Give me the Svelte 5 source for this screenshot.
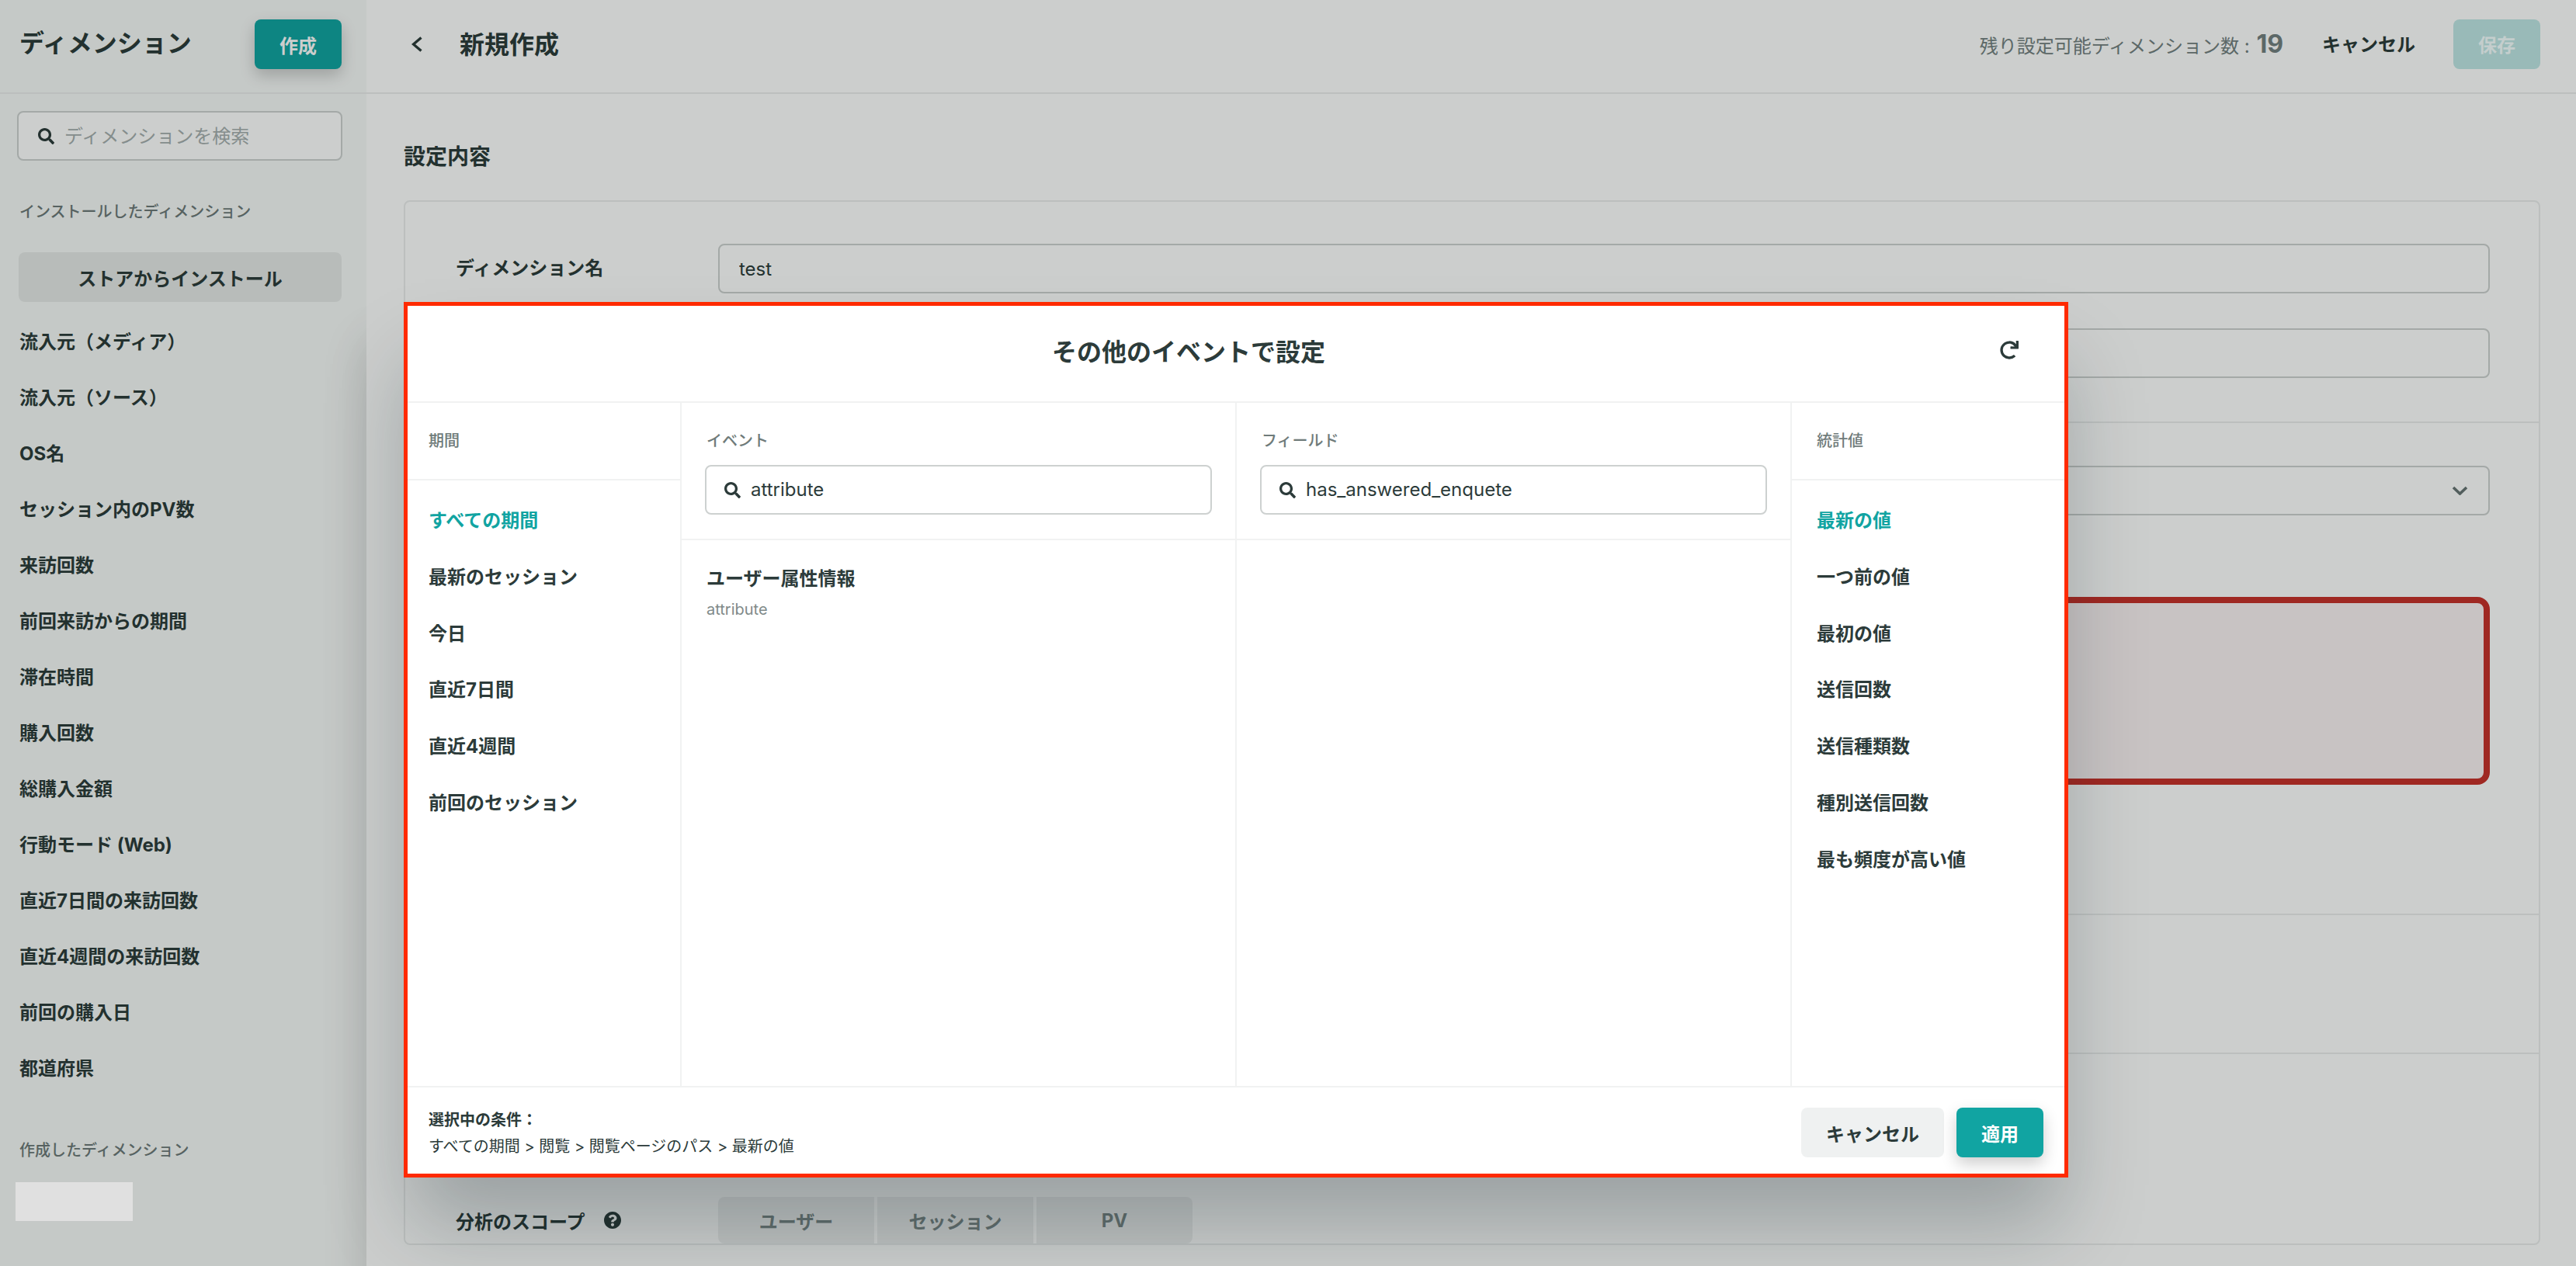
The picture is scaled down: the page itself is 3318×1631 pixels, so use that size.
<script>
  const dims = ['流入元（メディア）', '流入元（ソース）', 'OS名', 'セッション内のPV数', '来訪回数', '前回来訪からの期間', '滞在時間', '購入回数', '総購入金額', '行動モード (Web)', '直近7日間の来訪回数', '直近4週間の来訪回数', '前回の購入日', '都道府県'];
  const periods = ['すべての期間', '最新のセッション', '今日', '直近7日間', '直近4週間', '前回のセッション'];
  const stats = ['最新の値', '一つ前の値', '最初の値', '送信回数', '送信種類数', '種別送信回数', '最も頻度が高い値'];
  const scopes = ['ユーザー', 'セッション', 'PV'];
  const searchPath = 'M505 442.7L405.3 343c-4.5-4.5-10.6-7-17-7H372c27.6-35.3 44-79.7 44-128C416 93.1 322.9 0 208 0S0 93.1 0 208s93.1 208 208 208c48.3 0 92.7-16.4 128-44v16.3c0 6.4 2.5 12.5 7 17l99.7 99.7c9.4 9.4 24.6 9.4 33.9 0l28.3-28.3c9.4-9.4 9.4-24.6.1-34zM208 336c-70.7 0-128-57.2-128-128 0-70.7 57.2-128 128-128 70.7 0 128 57.2 128 128 0 70.7-57.2 128-128 128z';
</script>

<div class="page">
  <aside class="side">
    <header class="side-head">
      <h2>ディメンション</h2>
      <button class="btn primary">作成</button>
    </header>
    <label class="search side-search">
      <svg viewBox="0 0 512 512"><path d={searchPath} /></svg>
      <input placeholder="ディメンションを検索" />
    </label>
    <div class="side-label first">インストールしたディメンション</div>
    <button class="store">ストアからインストール</button>
    <ul class="dim-list">
      {#each dims as d}
        <li>{d}</li>
      {/each}
    </ul>
    <div class="side-label second">作成したディメンション</div>
    <div class="redacted"></div>
  </aside>

  <main class="main">
    <header class="main-head">
      <svg class="back" viewBox="0 0 14 20"><polyline points="12.5,1.5 2.5,10 12.5,18.5" /></svg>
      <h1>新規作成</h1>
      <div class="remain">残り設定可能ディメンション数 : <b>19</b></div>
      <button class="text-btn">キャンセル</button>
      <button class="btn primary disabled">保存</button>
    </header>
    <div class="content">
      <h3>設定内容</h3>
      <section class="card">
        <div class="row row-name">
          <div class="row-label">ディメンション名</div>
          <div class="fields">
            <input class="field" value="test" />
            <input class="field" />
          </div>
        </div>
        <div class="row row-setting">
          <div class="row-label"></div>
          <div class="fields">
            <div class="field select">
              <svg viewBox="0 0 21 12"><polyline points="2,2 10.5,10 19,2" /></svg>
            </div>
            <div class="error-box"></div>
          </div>
        </div>
        <div class="row row-blank"></div>
        <div class="row row-scope">
          <div class="row-label">
            分析のスコープ
            <svg class="help" viewBox="8 8 496 496"><path d="M504 256c0 136.997-111.043 248-248 248S8 392.997 8 256C8 119.083 119.043 8 256 8s248 111.083 248 248zM262.655 90c-54.497 0-89.255 22.957-116.549 63.758-3.536 5.286-2.353 12.415 2.715 16.258l34.699 26.31c5.205 3.947 12.621 3.008 16.665-2.122 17.864-22.658 30.113-35.797 57.303-35.797 20.429 0 45.698 13.148 45.698 32.958 0 14.976-12.363 22.667-32.534 33.976C247.128 238.528 216 254.941 216 296v4c0 6.627 5.373 12 12 12h56c6.627 0 12-5.373 12-12v-1.333c0-28.462 83.186-29.647 83.186-106.667 0-58.002-60.165-102-116.531-102zM256 338c-25.365 0-46 20.635-46 46 0 25.364 20.635 46 46 46s46-20.636 46-46c0-25.365-20.635-46-46-46z" /></svg>
          </div>
          <div class="scopes">
            {#each scopes as s}
              <button class="scope">{s}</button>
            {/each}
          </div>
        </div>
      </section>
    </div>
  </main>

  <div class="scrim"></div>

  <div class="modal">
    <header class="modal-head">
      <h2>その他のイベントで設定</h2>
      <svg class="reset" viewBox="0 0 512 512"><path d="M500.33 0h-47.41a12 12 0 0 0-12 12.57l4 82.76A247.42 247.42 0 0 0 256 8C119.34 8 8.9 119.53 8 256.19 7.1 393.07 118.08 504 256 504a247.1 247.1 0 0 0 166.18-63.91 12 12 0 0 0 .48-17.43l-34-34a12 12 0 0 0-16.38-.55A176 176 0 1 1 402.1 157.8l-101.53-4.87a12 12 0 0 0-12.57 12v47.41a12 12 0 0 0 12 12h200.33a12 12 0 0 0 12-12V12a12 12 0 0 0-12-12z" /></svg>
    </header>
    <div class="cols">
      <div class="col col-side">
        <div class="col-head short"><span>期間</span></div>
        <ul class="opts">
          {#each periods as p, i}
            <li class:active={i === 0}>{p}</li>
          {/each}
        </ul>
      </div>
      <div class="col col-mid">
        <div class="col-head tall">
          <span>イベント</span>
          <label class="search">
            <svg viewBox="0 0 512 512"><path d={searchPath} /></svg>
            <input value="attribute" />
          </label>
        </div>
        <div class="events">
          <div class="ev-title">ユーザー属性情報</div>
          <div class="ev-sub">attribute</div>
        </div>
      </div>
      <div class="col col-mid">
        <div class="col-head tall">
          <span>フィールド</span>
          <label class="search">
            <svg viewBox="0 0 512 512"><path d={searchPath} /></svg>
            <input value="has_answered_enquete" />
          </label>
        </div>
      </div>
      <div class="col col-last">
        <div class="col-head short"><span>統計値</span></div>
        <ul class="opts">
          {#each stats as s, i}
            <li class:active={i === 0}>{s}</li>
          {/each}
        </ul>
      </div>
    </div>
    <footer class="modal-foot">
      <div class="summary">
        <b>選択中の条件：</b>
        <div>すべての期間 &gt; 閲覧 &gt; 閲覧ページのパス &gt; 最新の値</div>
      </div>
      <div class="foot-btns">
        <button class="btn cancel">キャンセル</button>
        <button class="btn primary">適用</button>
      </div>
    </footer>
  </div>
</div>

<style>
  :global(body) {
    margin: 0;
    background: #fff;
  }
  * {
    box-sizing: border-box;
  }
  .page {
    position: relative;
    display: flex;
    width: 3318px;
    height: 1631px;
    overflow: hidden;
    font-family: Inter, "Noto Sans CJK JP", sans-serif;
    color: #2c3b3a;
    background: #fff;
  }
  h1, h2, h3, ul {
    margin: 0;
    padding: 0;
  }
  li {
    list-style: none;
  }
  button {
    font: inherit;
    border: 0;
    cursor: pointer;
  }
  input {
    font: inherit;
    color: inherit;
    border: 0;
    outline: 0;
    background: none;
  }

  .btn {
    height: 64px;
    border-radius: 8px;
    font-size: 24px;
    font-weight: 700;
  }
  .primary {
    width: 112px;
    color: #fff;
    background: #11a4a2;
    box-shadow: 0 8px 20px rgba(0, 0, 0, 0.2);
  }
  .primary.disabled {
    color: #f5ffff;
    background: #c0e6e5;
    box-shadow: none;
  }
  .cancel {
    width: 184px;
    color: #2c3b3a;
    background: #eff1f1;
  }

  /* サイドバー */
  .side {
    position: relative;
    flex: none;
    width: 472px;
    overflow: hidden;
    background: #f7f9f8;
  }
  .side::after {
    content: "";
    position: absolute;
    left: 100%;
    top: 440px;
    width: 60px;
    height: 1400px;
    box-shadow: 0 0 60px rgba(0, 0, 0, 0.14);
  }
  .side-head {
    display: flex;
    justify-content: space-between;
    height: 121px;
    padding: 25px 32px 0 25px;
    border-bottom: 2px solid #ebeded;
  }
  .side-head h2 {
    font-size: 32px;
    line-height: 62px;
    font-weight: 700;
  }
  .search {
    display: flex;
    align-items: center;
    gap: 13px;
    height: 64px;
    padding: 0 23px;
    border: 2px solid #cdd1d0;
    border-radius: 8px;
    background: #fff;
    font-size: 24px;
  }
  .search svg {
    flex: none;
    width: 21px;
    height: 21px;
    fill: #2c3b3a;
  }
  .search input {
    flex: 1;
    min-width: 0;
    padding: 0;
  }
  .search input::placeholder {
    color: #a6aeae;
    opacity: 1;
  }
  .side-search {
    width: 419px;
    margin: 22px 0 0 22px;
    padding-left: 25px;
  }
  .side-label {
    padding-left: 25px;
    font-size: 20px;
    line-height: 30px;
    font-weight: 500;
    color: #6d7978;
  }
  .side-label.first {
    margin-top: 51px;
  }
  .side-label.second {
    margin-top: 54px;
  }
  .store {
    display: block;
    width: 416px;
    height: 64px;
    margin: 37px 0 0 24px;
    border-radius: 8px;
    font-size: 24px;
    font-weight: 700;
    color: #2c3b3a;
    background: #e7e9e8;
  }
  .dim-list {
    margin-top: 16px;
  }
  .dim-list li {
    height: 72px;
    padding-left: 25px;
    line-height: 72px;
    font-size: 24px;
    font-weight: 700;
  }
  .redacted {
    position: relative;
    z-index: 2;
    width: 151px;
    height: 50px;
    margin: 26px 0 0 20px;
    background: #e0e0e0;
  }

  /* メイン */
  .main {
    flex: 1;
    min-width: 0;
  }
  .main-head {
    display: flex;
    align-items: center;
    height: 121px;
    padding: 0 46px 6px 58px;
    border-bottom: 2px solid #ebeded;
  }
  .back {
    width: 14px;
    height: 20px;
    fill: none;
    stroke: #2c3b3a;
    stroke-width: 3.4;
  }
  .main-head h1 {
    margin: 0 0 3px 48px;
    font-size: 32px;
    font-weight: 700;
  }
  .remain {
    margin-left: auto;
    margin-bottom: 1px;
    font-size: 24px;
    color: #738080;
  }
  .remain b {
    margin-left: 2px;
    font-size: 32px;
  }
  .text-btn {
    margin: 0 49px 2px 50px;
    padding: 0;
    font-size: 24px;
    font-weight: 700;
    color: #2c3b3a;
    background: none;
  }
  .content {
    padding: 0 46px 0 48px;
  }
  .content h3 {
    height: 137px;
    padding-top: 60px;
    font-size: 28px;
    line-height: 42px;
    font-weight: 700;
  }
  .card {
    border: 2px solid #ebeded;
    border-radius: 8px;
  }
  .row {
    display: flex;
    padding: 0 63px 0 65px;
    border-bottom: 2px solid #ebeded;
  }
  .row-label {
    flex: none;
    width: 338px;
    font-size: 24px;
    font-weight: 700;
  }
  .fields {
    flex: 1;
    min-width: 0;
  }
  .field {
    display: block;
    width: 100%;
    height: 64px;
    padding: 0 25px;
    border: 2px solid #cdd1d0;
    border-radius: 8px;
    font-size: 24px;
    background: #fff;
  }
  .row-name {
    height: 285px;
    padding-top: 54px;
  }
  .row-name .row-label {
    line-height: 64px;
  }
  .row-name .field + .field {
    margin-top: 45px;
  }
  .row-setting {
    height: 634px;
    padding-top: 55px;
  }
  .select {
    display: flex;
    align-items: center;
    justify-content: flex-end;
    padding-right: 26px;
  }
  .select svg {
    width: 21px;
    height: 12px;
    fill: none;
    stroke: #677473;
    stroke-width: 3.6;
  }
  .error-box {
    height: 242px;
    margin-top: 105px;
    border: 8px solid #c7302a;
    border-radius: 16px;
    background: #fbf2f3;
  }
  .row-blank {
    height: 179px;
  }
  .row-scope {
    padding-top: 184px;
    border-bottom: 0;
  }
  .row-scope .row-label {
    display: flex;
    align-items: center;
    gap: 24px;
    height: 60px;
  }
  .help {
    width: 22px;
    height: 22px;
    fill: #2c3b3a;
  }
  .scopes {
    display: flex;
    gap: 4px;
  }
  .scope {
    width: 201px;
    height: 60px;
    font-size: 24px;
    font-weight: 700;
    color: #7b8888;
    background: #eff1f1;
  }
  .scope:first-child {
    border-radius: 8px 0 0 8px;
  }
  .scope:last-child {
    border-radius: 0 8px 8px 0;
  }

  .scrim {
    position: absolute;
    inset: 0;
    z-index: 1;
    background: rgba(0, 8, 5, 0.2);
  }

  /* モーダル */
  .modal {
    position: absolute;
    left: 520px;
    top: 389px;
    z-index: 3;
    display: flex;
    flex-direction: column;
    width: 2144px;
    height: 1128px;
    border: 5px solid #ff2a00;
    background: #fff;
    box-shadow: 0 70px 100px -10px rgba(10, 30, 40, 0.26);
  }
  .modal-head {
    flex: none;
    display: flex;
    align-items: center;
    height: 125px;
    padding: 0 59px 10px 0;
    border-bottom: 2px solid #f1f2f2;
  }
  .modal-head h2 {
    flex: 1;
    text-align: center;
    font-size: 32px;
    font-weight: 700;
  }
  .reset {
    width: 24px;
    height: 24px;
    margin-left: 39px;
    fill: #2c3b3a;
  }
  .cols {
    flex: 1;
    min-height: 0;
    display: flex;
  }
  .col {
    border-right: 2px solid #f1f2f2;
  }
  .col-side {
    flex: none;
    width: 353px;
  }
  .col-mid {
    flex: none;
    width: 715px;
  }
  .col-last {
    flex: 1;
    border-right: 0;
  }
  .col-head {
    border-bottom: 2px solid #f1f2f2;
    padding: 34px 0 0 32px;
    font-size: 20px;
    line-height: 30px;
    font-weight: 500;
    color: #6f7b7a;
  }
  .col-head span {
    display: block;
  }
  .col-head.short {
    height: 100px;
  }
  .col-side .col-head {
    padding-left: 27px;
  }
  .col-head.tall {
    height: 177px;
    padding-left: 30px;
    padding-right: 30px;
  }
  .col-head.tall span {
    padding-left: 2px;
  }
  .col-head .search {
    margin-top: 16px;
    color: #2c3b3a;
    font-weight: 400;
  }
  .opts {
    padding: 16px 0 0 32px;
  }
  .col-side .opts {
    padding-left: 27px;
  }
  .opts li {
    height: 72.8px;
    line-height: 72.8px;
    font-size: 24px;
    font-weight: 700;
  }
  .opts li.active {
    color: #11a4a2;
  }
  .events {
    padding: 32px 0 0 32px;
  }
  .ev-title {
    font-size: 24px;
    line-height: 36px;
    font-weight: 700;
  }
  .ev-sub {
    margin-top: 6px;
    font-size: 20px;
    line-height: 30px;
    color: #808a89;
  }
  .modal-foot {
    flex: none;
    display: flex;
    justify-content: space-between;
    height: 113px;
    padding: 26px 27px 0;
    border-top: 2px solid #f1f2f2;
  }
  .summary {
    margin-top: -1px;
    font-size: 20px;
    line-height: 34px;
  }
  .foot-btns {
    display: flex;
    gap: 16px;
  }
</style>
